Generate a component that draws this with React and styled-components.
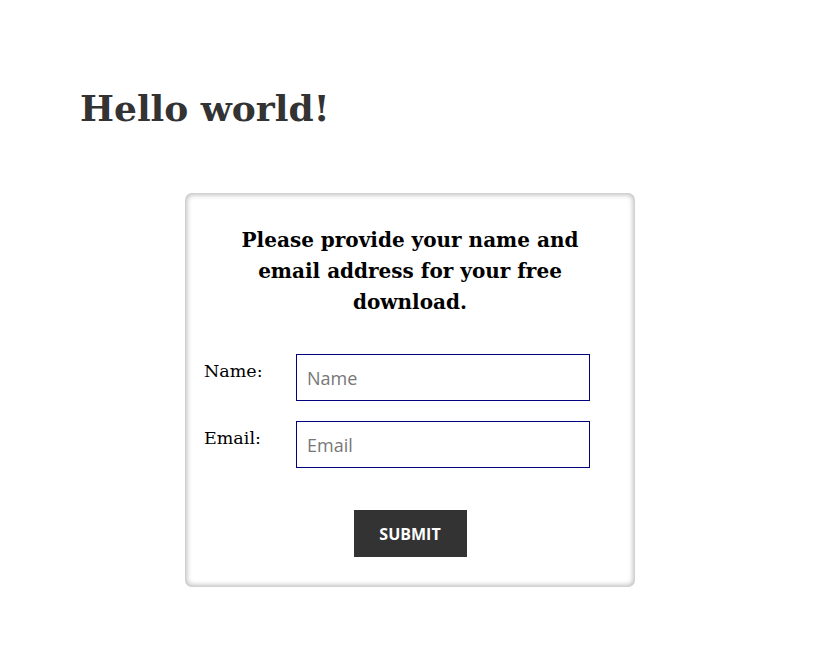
import React from 'react';
import styled, { createGlobalStyle } from 'styled-components';

const GlobalStyle = createGlobalStyle`
  body {
    margin: 0;
    background: #fff;
    font-family: "DejaVu Serif", "Liberation Serif", serif;
  }
`;

const Page = styled.div`
  padding: 82px 80px 0;
`;

const Title = styled.h1`
  margin: 0;
  font-size: 36px;
  line-height: 52px;
  font-weight: bold;
  color: #333;
`;

const Card = styled.form`
  width: 450px;
  box-sizing: border-box;
  margin: 59px 0 0 105px;
  padding: 32px 44px 30px 19px;
  border-radius: 7px;
  background: #fff;
  box-shadow: inset 0 0 5px 2px rgba(0, 0, 0, 0.25);
`;

const Lead = styled.h2`
  margin: 0 0 36px 25px;
  font-size: 20px;
  line-height: 31px;
  font-weight: bold;
  text-align: center;
  color: #000;
`;

const Row = styled.div`
  display: grid;
  grid-template-columns: 92px 294px;
  margin-bottom: 20px;
`;

const Label = styled.label`
  font-size: 17.5px;
  line-height: 22px;
  padding-top: 6px;
  color: #000;
`;

const Field = styled.input`
  box-sizing: border-box;
  height: 47px;
  padding: 0 10px;
  border: 1px solid #000080;
  font-family: "Open Sans", sans-serif;
  font-size: 18px;
  color: #333;
  outline: none;

  &::placeholder {
    color: #777;
  }
`;

const Actions = styled.div`
  display: flex;
  justify-content: center;
  padding: 22px 0 0 25px;
`;

const Button = styled.button`
  width: 113px;
  height: 47px;
  border: 0;
  background: #333;
  color: #fff;
  font-family: "Open Sans", sans-serif;
  font-weight: bold;
  font-size: 16px;
  text-transform: uppercase;
`;

export default function App() {
  return (
    <>
      <GlobalStyle />
      <Page>
        <Title>Hello world!</Title>
        <Card onSubmit={(e) => e.preventDefault()}>
          <Lead>Please provide your name and email address for your free download.</Lead>
          <Row>
            <Label htmlFor="name">Name:</Label>
            <Field id="name" type="text" placeholder="Name" />
          </Row>
          <Row>
            <Label htmlFor="email">Email:</Label>
            <Field id="email" type="email" placeholder="Email" />
          </Row>
          <Actions>
            <Button type="submit">Submit</Button>
          </Actions>
        </Card>
      </Page>
    </>
  );
}
